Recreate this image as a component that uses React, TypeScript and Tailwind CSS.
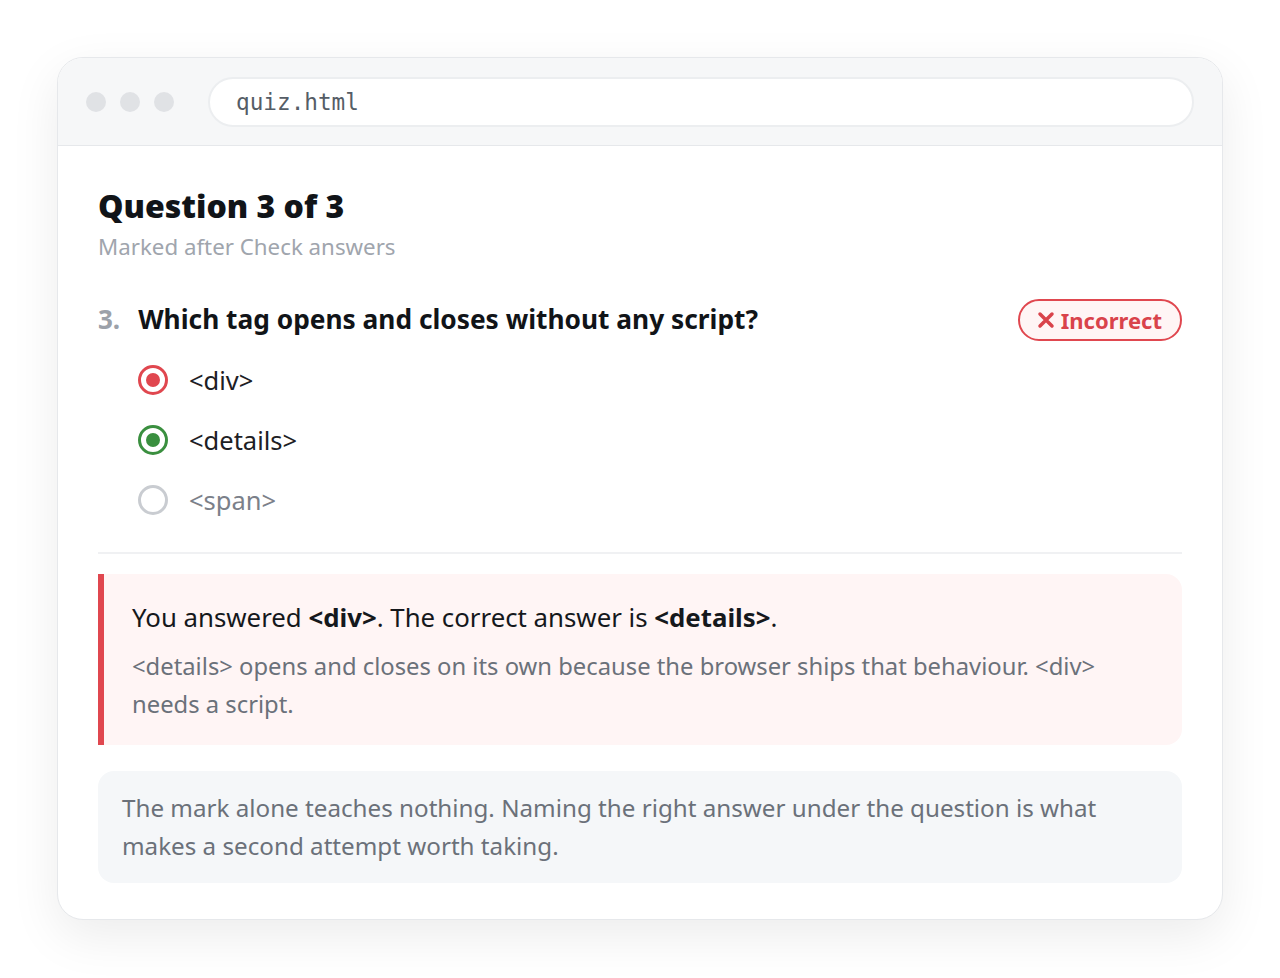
import React from "react";

function Radio({ state }: { state: "wrong" | "right" | "none" }) {
  if (state === "none") {
    return <span className="block w-[30px] h-[30px] rounded-full border-[3px] border-[#c9ccd1] bg-white" />;
  }
  const c = state === "wrong" ? "border-[#e0474f]" : "border-[#3a8f3f]";
  const d = state === "wrong" ? "bg-[#e0474f]" : "bg-[#3a8f3f]";
  return (
    <span className={`flex items-center justify-center w-[30px] h-[30px] rounded-full border-[3px] ${c} bg-white`}>
      <span className={`block w-[14px] h-[14px] rounded-full ${d}`} />
    </span>
  );
}

export default function App() {
  const font = { fontFamily: '"Noto Sans", "Open Sans", sans-serif' };
  return (
    <div className="w-[1280px] h-[978px] bg-white pt-[57px] px-[57px]" style={font}>
      <div className="w-[1166px] rounded-[26px] border border-[#e6e8eb] bg-white overflow-hidden shadow-[0_16px_50px_rgba(0,0,0,0.08)]">
        <div className="h-[88px] bg-[#f6f7f8] border-b border-[#e6e8eb] flex items-center pl-[28px] pr-[28px]">
          <div className="flex gap-[14px]">
            <span className="block w-[20px] h-[20px] rounded-full bg-[#e0e2e5]" />
            <span className="block w-[20px] h-[20px] rounded-full bg-[#e0e2e5]" />
            <span className="block w-[20px] h-[20px] rounded-full bg-[#e0e2e5]" />
          </div>
          <div className="ml-[34px] flex-1 h-[50px] rounded-full bg-white border-2 border-[#eceef0] flex items-center pl-[26px] pt-[2px] text-[22.7px] text-[#555d66]" style={{ fontFamily: '"DejaVu Sans Mono", "Liberation Mono", monospace' }}>
            quiz.html
          </div>
        </div>
        <div className="px-[40px] pt-[40px] pb-[36px]">
          <h1 className="text-[32px] leading-[40px] font-black text-[#111418]">Question 3 of 3</h1>
          <p className="mt-[5px] text-[22.3px] leading-[32px] text-[#a0a5ad]">Marked after Check answers</p>

          <div className="mt-[36px] flex items-center justify-between">
            <div className="flex items-baseline gap-[18px]">
              <span className="text-[26px] font-bold text-[#9ca1a9]">3.</span>
              <span className="text-[26.3px] font-bold text-[#111418]">Which tag opens and closes without any script?</span>
            </div>
            <span className="flex items-center gap-[6px] h-[42px] pl-[17px] pr-[18px] rounded-full border-2 border-[#e0474f] bg-[#fff5f5] text-[#d9434b] text-[22px] font-bold">
              <svg width="18" height="18" viewBox="0 0 18 18" fill="none" stroke="currentColor" strokeWidth="3.5" strokeLinecap="round">
                <path d="M3 3 L15 15 M15 3 L3 15" />
              </svg>
              Incorrect
            </span>
          </div>

          <div className="mt-[24px] pl-[40px] flex flex-col gap-[30px]">
            <div className="flex items-center gap-[21px] h-[30px]">
              <Radio state="wrong" />
              <span className="text-[25.5px] text-[#1d2024]">&lt;div&gt;</span>
            </div>
            <div className="flex items-center gap-[21px] h-[30px]">
              <Radio state="right" />
              <span className="text-[25.5px] text-[#1d2024]">&lt;details&gt;</span>
            </div>
            <div className="flex items-center gap-[21px] h-[30px]">
              <Radio state="none" />
              <span className="text-[25.5px] text-[#7b8089]">&lt;span&gt;</span>
            </div>
          </div>

          <div className="mt-[37px] h-[2px] bg-[#f0f1f3]" />

          <div className="mt-[20px] border-l-[6px] border-[#e0474f] bg-[#fff5f5] rounded-r-[16px] pl-[28px] pr-[40px] pt-[22px] pb-[22px]">
            <p className="text-[25.8px] leading-[42px] text-[#15181c]">
              You answered <b>&lt;div&gt;</b>. The correct answer is <b>&lt;details&gt;</b>.
            </p>
            <p className="mt-[9px] text-[23.8px] leading-[38px] text-[#6b717a]">
              &lt;details&gt; opens and closes on its own because the browser ships that behaviour. &lt;div&gt; needs a script.
            </p>
          </div>

          <div className="mt-[26px] bg-[#f5f7f9] rounded-[16px] px-[24px] pt-[18px] pb-[18px]">
            <p className="text-[24.2px] leading-[38px] text-[#6b717a]">
              The mark alone teaches nothing. Naming the right answer under the question is what makes a second attempt worth taking.
            </p>
          </div>
        </div>
      </div>
    </div>
  );
}
